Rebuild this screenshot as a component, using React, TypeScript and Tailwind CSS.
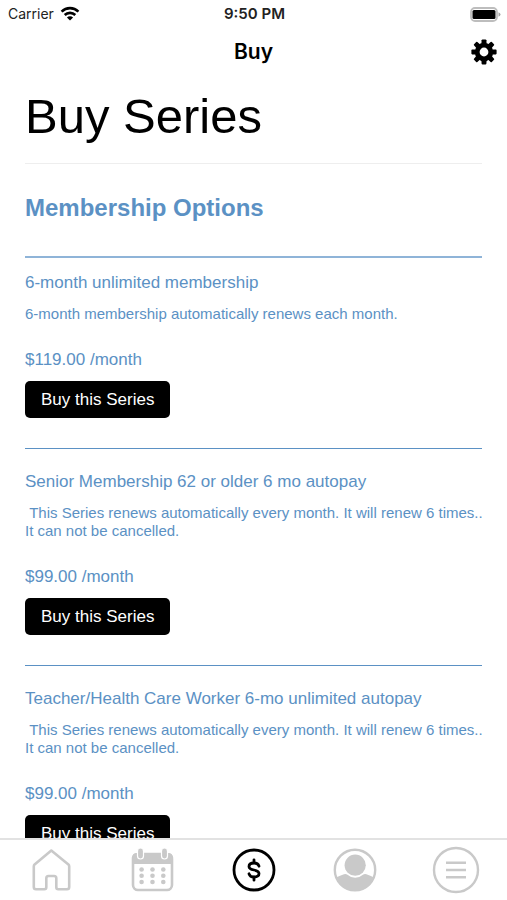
import React from 'react';

interface Series {
  id: number;
  name: string;
  description: string;
  price: string;
}

const SERIES: Series[] = [
  {
    id: 1,
    name: '6-month unlimited membership',
    description: '6-month membership automatically renews each month.',
    price: '$119.00 /month',
  },
  {
    id: 2,
    name: 'Senior Membership 62 or older 6 mo autopay',
    description: '\u00a0This Series renews automatically every month. It will renew 6 times.. It can not be cancelled.',
    price: '$99.00 /month',
  },
  {
    id: 3,
    name: 'Teacher/Health Care Worker 6-mo unlimited autopay',
    description: '\u00a0This Series renews automatically every month. It will renew 6 times.. It can not be cancelled.',
    price: '$99.00 /month',
  },
];

const WifiIcon = () => (
  <svg width="20" height="16" viewBox="0 0 20 16" fill="none" stroke="#000" strokeWidth="2.6">
    <path d="M1.6 5.6a12 12 0 0 1 16.8 0" />
    <path d="M4.7 9a7.6 7.6 0 0 1 10.6 0" />
    <path d="M10 14.6 6.9 11.5a4.4 4.4 0 0 1 6.2 0z" fill="#000" stroke="none" />
  </svg>
);

const BatteryIcon = () => (
  <svg width="31" height="15" viewBox="0 0 31 15">
    <rect x="1" y="1" width="26" height="13" rx="4" fill="#fff" stroke="#bdbdbd" strokeWidth="1.8" />
    <rect x="2.5" y="3" width="23" height="9" rx="1.5" fill="#000" />
    <path d="M28.5 5.2q2 .8 2 2.3t-2 2.3z" fill="#a3a3a3" />
  </svg>
);

const GearIcon = () => (
  <svg width="26" height="26" viewBox="-13 -13 26 26">
    <circle r="6.8" fill="none" stroke="#000" strokeWidth="4.8" />
    {[0, 45, 90, 135, 180, 225, 270, 315].map((angle) => (
      <path key={angle} d="M-2.6-8-2.4-11.8q.2-.8.9-.8h3q.7 0 .9.8L2.6-8z" transform={`rotate(${angle})`} />
    ))}
  </svg>
);

const HomeIcon = () => (
  <svg width="48" height="48" viewBox="0 0 48 48" fill="none" stroke="#c9c9c9" strokeWidth="2.6" strokeLinejoin="round">
    <path d="M24.3 4.6 7.6 18.4q-.8.8-.8 2V41q0 2.2 2.2 2.2h8.3q2 0 2-2v-9q0-2.2 2.2-2.2h5.6q2.2 0 2.2 2.2v9q0 2 2 2H40q2.2 0 2.2-2.2V20.4q0-1.200-.8-2z" />
  </svg>
);

const CalendarIcon = () => (
  <svg width="48" height="48" viewBox="0 0 48 48">
    <rect x="5" y="8" width="39" height="36" rx="5" fill="#fff" stroke="#c9c9c9" strokeWidth="2.6" />
    <path d="M4 18v-6q0-5 5-5h31q5 0 5 5v6z" fill="#c9c9c9" />
    {[12.5, 36.5].map((x) => (
      <rect key={x} x={x - 3} y="2" width="6" height="11" rx="3" fill="#c9c9c9" stroke="#fff" strokeWidth="1.2" />
    ))}
    {[23.5, 29.7, 36].map((y) =>
      [13.6, 24.5, 35.3].map((x) => <circle key={`${x}-${y}`} cx={x} cy={y} r="2.3" fill="#c9c9c9" />)
    )}
  </svg>
);

const DollarIcon = () => (
  <svg width="48" height="48" viewBox="0 0 48 48" fill="none" stroke="#000" strokeWidth="2.8" strokeLinecap="round">
    <circle cx="24" cy="24" r="20" />
    <path d="M24 13.8v3M24 31.2v3" />
    <path d="M29 20.2q-1-3.200-5-3.200-5 0-5 3.400 0 2.600 5 3.600t5 3.600q0 3.400-5 3.400-4 0-5-3.200" />
  </svg>
);

const UserIcon = () => (
  <svg width="48" height="48" viewBox="0 0 48 48" fill="#c9c9c9">
    <circle cx="24" cy="24" r="20.2" fill="none" stroke="#c9c9c9" strokeWidth="2.4" />
    <circle cx="24.2" cy="19.2" r="10.6" />
    <path d="M5 31.5q4-2 8-3.200 2-.6 3.500.5 3.300 3 7.700 3t7.700-3q1.500-1.100 3.500-.5 4 1.200 7.600 3.200Q38.500 44.500 24 44.500T5 31.500z" />
  </svg>
);

const MenuIcon = () => (
  <svg width="48" height="48" viewBox="0 0 48 48" fill="none" stroke="#c9c9c9" strokeWidth="2.4">
    <circle cx="24" cy="24" r="22" />
    <path d="M14 16.7h20M14 24h20M14 31.3h20" />
  </svg>
);

const TABS = [
  { label: 'Home', Icon: HomeIcon },
  { label: 'Schedule', Icon: CalendarIcon },
  { label: 'Buy', Icon: DollarIcon },
  { label: 'Profile', Icon: UserIcon },
  { label: 'Menu', Icon: MenuIcon },
];

const StatusBar = () => (
  <div className="grid h-7 grid-cols-3 items-center pl-2 pr-1.5 font-['Inter',sans-serif] text-sm text-[#222]">
    <div className="flex items-center gap-1.5">
      <span>Carrier</span>
      <WifiIcon />
    </div>
    <span className="text-center text-[15px] font-semibold">9:50 PM</span>
    <div className="flex justify-end">
      <BatteryIcon />
    </div>
  </div>
);

const SeriesItem: React.FC<{ series: Series }> = ({ series }) => (
  <article className="mb-[30px] border-t border-[#5b91c4] pt-[21px] first:border-t-2 first:border-[#8fb4d8] first:pt-[13px]">
    <h3 className="text-[17px] leading-6">{series.name}</h3>
    <p className="-mr-2 mt-[10px] text-[15px] leading-[18px]">{series.description}</p>
    <p className="mt-[25px] text-[17px] leading-6">{series.price}</p>
    <button className="mt-[9px] block h-[37px] rounded-[5px] bg-black px-4 text-[17px] text-white">
      Buy this Series
    </button>
  </article>
);

export default function App() {
  return (
    <div className="flex h-screen flex-col bg-white font-['Liberation_Sans',sans-serif] text-black">
      <StatusBar />
      <header className="grid h-12 grid-cols-3 items-center px-[10px] font-['Inter',sans-serif]">
        <span className="col-start-2 text-center text-[21px] font-semibold">Buy</span>
        <button aria-label="Settings" className="justify-self-end">
          <GearIcon />
        </button>
      </header>

      <main className="min-h-0 flex-1 overflow-y-auto px-[25px] pt-3 [scrollbar-width:none]">
        <h1 className="border-b border-[#eee] pb-[19px] text-[49px] leading-14">Buy Series</h1>
        <section className="text-[#5b91c4]">
          <h2 className="mb-8 mt-7 text-2xl font-bold">Membership Options</h2>
          <div>
            {SERIES.map((series) => (
              <SeriesItem key={series.id} series={series} />
            ))}
          </div>
        </section>
      </main>

      <nav className="flex h-[62px] shrink-0 items-center border-t-2 border-[#e2e2e2] bg-white">
        {TABS.map(({ label, Icon }) => (
          <button key={label} aria-label={label} className="flex flex-1 justify-center">
            <Icon />
          </button>
        ))}
      </nav>
    </div>
  );
}
